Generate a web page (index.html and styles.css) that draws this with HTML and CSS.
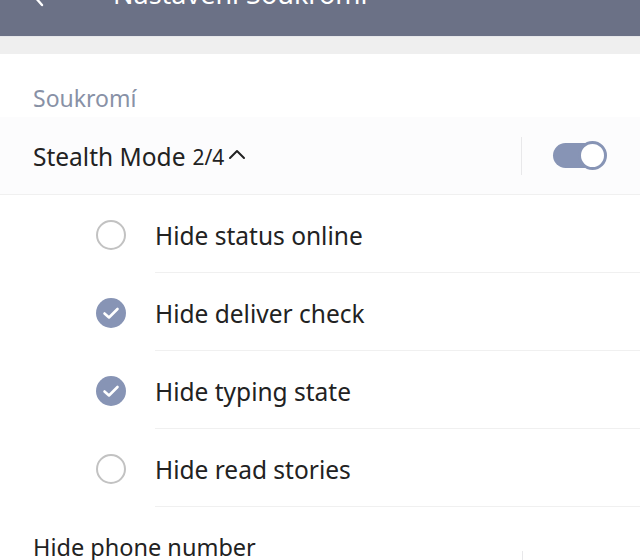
FILE: index.html
```html
<!DOCTYPE html>
<html lang="cs">
<head>
<meta charset="utf-8">
<link rel="stylesheet" href="styles.css">
</head>
<body>
<header class="topbar">
  <svg class="back" width="14" height="24" viewBox="0 0 14 24"><path d="M2 -3 L9 5" stroke="#fff" stroke-width="2.4" fill="none" stroke-linecap="round"/></svg>
  <div class="title">Nastavení Soukromí</div>
</header>
<div class="band"></div>
<main class="content">
  <div class="section-label">Soukromí</div>
  <div class="stealth">
    <div class="stealth-title">Stealth Mode <span class="count">2/4</span>
      <svg class="chev" width="18" height="12" viewBox="0 0 18 12"><path d="M2 10 L9 3 L16 10" stroke="#222" stroke-width="2" fill="none" stroke-linecap="round" stroke-linejoin="round"/></svg>
    </div>
    <div class="stealth-right">
      <div class="vsep"></div>
      <div class="toggle"><div class="knob"></div></div>
    </div>
  </div>
  <div class="options">
    <div class="opt">
      <span class="radio"></span>
      <div class="opt-text">Hide status online</div>
    </div>
    <div class="opt">
      <span class="radio on"><svg width="18" height="14" viewBox="0 0 18 14"><path d="M2.5 7.5 L7 11.5 L15.5 3" stroke="#fff" stroke-width="2.6" fill="none" stroke-linecap="round" stroke-linejoin="round"/></svg></span>
      <div class="opt-text">Hide deliver check</div>
    </div>
    <div class="opt">
      <span class="radio on"><svg width="18" height="14" viewBox="0 0 18 14"><path d="M2.5 7.5 L7 11.5 L15.5 3" stroke="#fff" stroke-width="2.6" fill="none" stroke-linecap="round" stroke-linejoin="round"/></svg></span>
      <div class="opt-text">Hide typing state</div>
    </div>
    <div class="opt">
      <span class="radio"></span>
      <div class="opt-text">Hide read stories</div>
    </div>
  </div>
  <div class="phone">
    <div class="phone-text">Hide phone number</div>
    <div class="vsep small"></div>
  </div>
</main>
</body>
</html>
```

FILE: styles.css
```css
* { box-sizing: border-box; }
html, body { margin: 0; padding: 0; }
body {
  width: 640px;
  height: 560px;
  overflow: hidden;
  background: #fff;
  font-family: "Noto Sans", "Liberation Sans", sans-serif;
  color: #222;
}
.topbar {
  height: 36px;
  background: #6b7186;
  display: flex;
  align-items: flex-start;
  overflow: hidden;
  padding-left: 33px;
}
.back { flex: none; }
.title {
  margin-left: 66px;
  margin-top: -22px;
  color: #fff;
  font-size: 27px;
  line-height: 32px;
  white-space: nowrap;
}
.band {
  height: 18px;
  background: #efefef;
  border-top: 1px solid #e6e7ea;
}
.content { background: #fff; }
.section-label {
  padding: 29px 0 0 33px;
  height: 63px;
  font-size: 23px;
  line-height: 30px;
  color: #8891a6;
}
.stealth {
  height: 78px;
  background: #fcfcfd;
  display: flex;
  align-items: center;
  justify-content: space-between;
  padding-left: 33px;
  border-bottom: 1.5px solid #f0f0f0;
}
.stealth-title {
  font-size: 24.5px;
  line-height: 30px;
  display: flex;
  align-items: center;
  white-space: nowrap;
  padding-top: 2px;
}
.count { font-size: 21px; margin-left: 7px; }
.chev { margin-left: 4px; margin-top: -5px; }
.stealth-right {
  display: flex;
  align-items: center;
  height: 100%;
}
.vsep {
  width: 1px;
  height: 38px;
  background: #e8e8ea;
}
.toggle {
  margin-left: 31px;
  margin-right: 35px;
  width: 52px;
  height: 25px;
  border-radius: 13px;
  background: #8794b5;
  position: relative;
}
.knob {
  position: absolute;
  right: -2px;
  top: -2px;
  width: 29px;
  height: 29px;
  border-radius: 50%;
  background: #fff;
  border: 3px solid #8794b5;
}
.options { padding-left: 96px; }
.opt {
  height: 78px;
  display: flex;
  align-items: center;
}
.radio {
  flex: none;
  width: 30px;
  height: 30px;
  border-radius: 50%;
  border: 2.5px solid #c2c2c2;
  display: flex;
  align-items: center;
  justify-content: center;
  margin-top: 2px;
}
.radio.on {
  border: none;
  background: #8794b5;
}
.opt-text {
  margin-left: 29px;
  align-self: stretch;
  flex: 1;
  display: flex;
  align-items: center;
  padding-top: 3px;
  font-size: 24.5px;
  border-bottom: 1.5px solid #f0f0f0;
}
.phone {
  height: 78px;
  display: flex;
  align-items: center;
  justify-content: space-between;
  padding: 0 117px 0 33px;
}
.phone-text { font-size: 23.5px; padding-top: 2px; }
.vsep.small { height: 30px; margin-top: 40px; }
```
